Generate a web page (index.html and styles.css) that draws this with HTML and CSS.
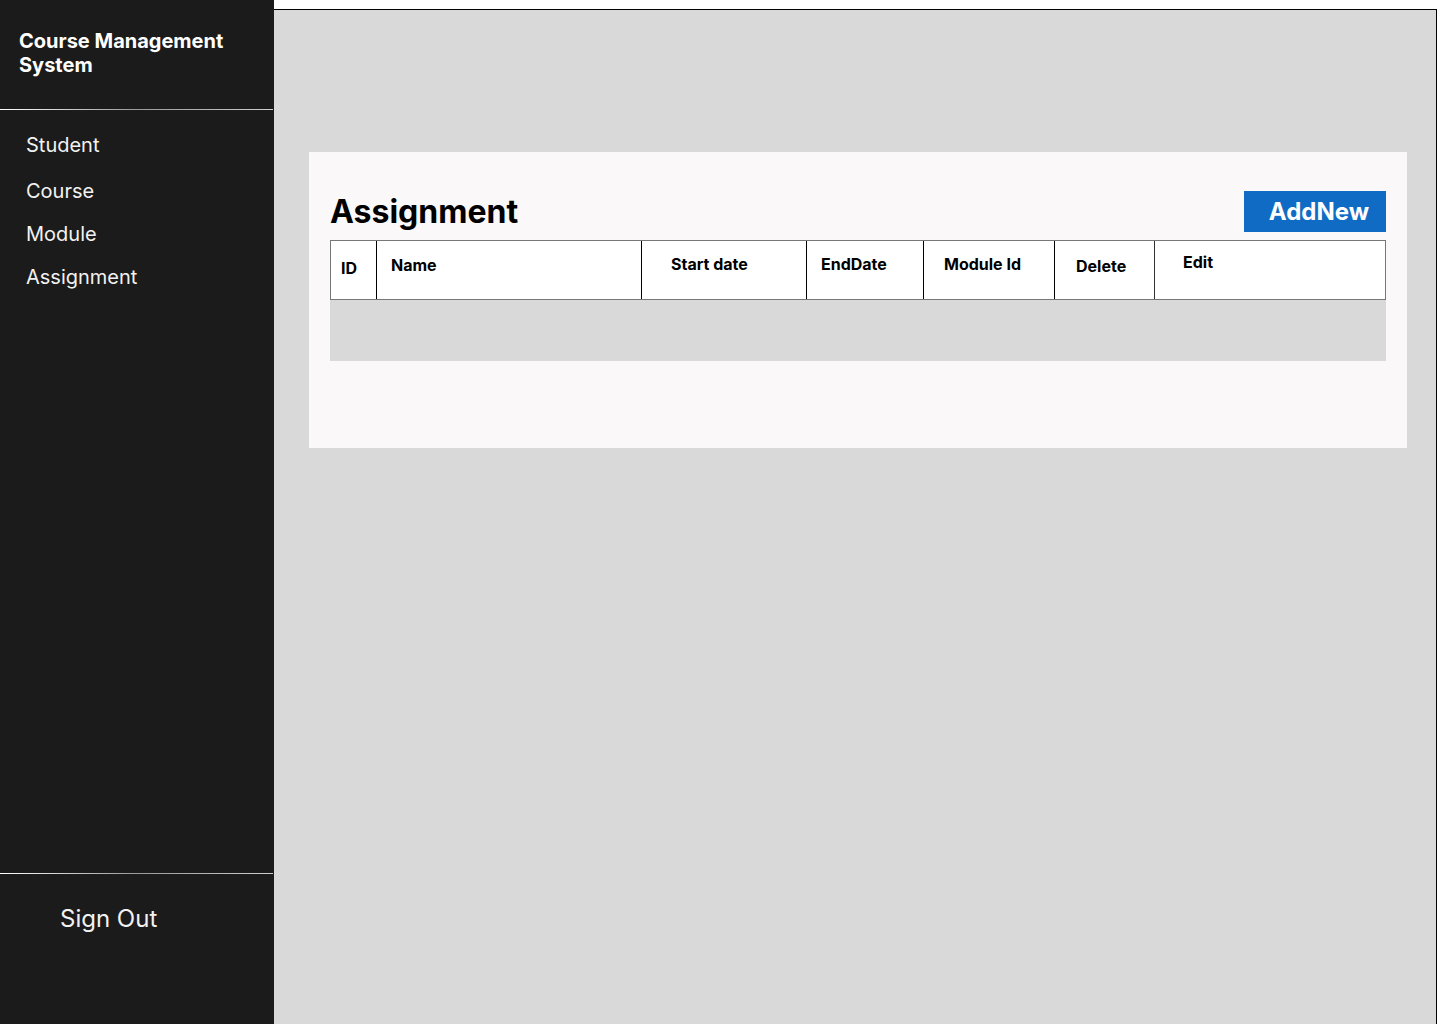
FILE: index.html
```html
<!DOCTYPE html>
<html lang="en">
<head>
<meta charset="utf-8">
<title>Course Management System - Assignment</title>
<link rel="stylesheet" href="styles.css">
</head>
<body>
<div class="app">
  <aside class="sidebar">
    <div class="brand">Course Management<br>System</div>
    <div class="divider"></div>
    <nav class="nav">
      <a class="nav-item nav-first" href="#">Student</a>
      <a class="nav-item" href="#">Course</a>
      <a class="nav-item" href="#">Module</a>
      <a class="nav-item" href="#">Assignment</a>
    </nav>
    <div class="divider"></div>
    <div class="signout">Sign Out</div>
  </aside>
  <main class="main">
    <section class="card">
      <div class="card-head">
        <h1 class="title">Assignment</h1>
        <button class="btn-add">AddNew</button>
      </div>
      <div class="table">
        <div class="thead">
          <div class="th c-id">ID</div>
          <div class="th c-name">Name</div>
          <div class="th c-start">Start date</div>
          <div class="th c-end">EndDate</div>
          <div class="th c-mod">Module Id</div>
          <div class="th c-del">Delete</div>
          <div class="th c-edit">Edit</div>
        </div>
        <div class="tbody"></div>
      </div>
    </section>
  </main>
</div>
</body>
</html>
```
FILE: styles.css
```css
* { box-sizing: border-box; }
html, body { margin: 0; padding: 0; }
body {
  background: #ffffff;
  font-family: Inter, "Noto Sans", sans-serif;
  width: 1440px;
  height: 1024px;
  overflow: hidden;
}
.app {
  display: flex;
  height: 1024px;
}
.sidebar {
  width: 274px;
  flex: 0 0 274px;
  background: #1b1b1b;
  color: #ffffff;
  display: flex;
  flex-direction: column;
  height: 1024px;
  position: relative;
  z-index: 1;
}
.brand {
  font-size: 20px;
  font-weight: 700;
  line-height: 24px;
  padding: 29px 0 0 19px;
  height: 109px;
}
.divider {
  height: 1px;
  width: 273px;
  background: linear-gradient(90deg, #ffffff 0%, #9a9a9a 50%, #cfcfcf 100%);
}
.nav {
  display: flex;
  flex-direction: column;
  padding: 23px 0 0 26px;
  flex: 1;
}
.nav-item {
  color: #f2f2f2;
  text-decoration: none;
  font-size: 20px;
  line-height: 24px;
  margin-bottom: 19px;
}
.nav-first { margin-bottom: 22px; }
.signout {
  height: 150px;
  padding: 30px 0 0 60px;
  font-size: 24px;
  line-height: 30px;
  color: #f2f2f2;
}
.main {
  margin-top: 9px;
  margin-left: -1px;
  width: 1164px;
  height: 1015px;
  background: #d9d9d9;
  border: 1px solid #000000;
  border-bottom: none;
  padding: 142px 29px 0 35px;
}
.card {
  background: #faf8f9;
  width: 1098px;
  height: 296px;
  padding: 39px 21px 0 21px;
}
.card-head {
  display: flex;
  justify-content: space-between;
  align-items: flex-start;
  height: 49px;
}
.title {
  margin: 0;
  font-size: 32px;
  font-weight: 700;
  line-height: 40px;
  color: #000000;
  padding-top: 1px;
}
.btn-add {
  width: 142px;
  height: 41px;
  background: #0f6bc3;
  color: #ffffff;
  border: none;
  font-family: Inter, "Noto Sans", sans-serif;
  font-size: 24px;
  font-weight: 700;
  padding: 0 0 0 8px;
  line-height: 41px;
}
.table {
  width: 1056px;
}
.thead {
  display: flex;
  height: 60px;
  background: #ffffff;
  border: 1px solid #777777;
}
.th {
  font-size: 16px;
  font-weight: 700;
  line-height: 20px;
  color: #000000;
  border-right: 1px solid #000000;
  padding-top: 14px;
}
.c-id { width: 46px; padding-left: 10px; padding-top: 17px; }
.c-name { width: 265px; padding-left: 14px; }
.c-start { width: 165px; padding-left: 29px; padding-top: 13px; }
.c-end { width: 117px; padding-left: 14px; padding-top: 13px; }
.c-mod { width: 131px; padding-left: 20px; padding-top: 13px; }
.c-del { width: 100px; padding-left: 21px; padding-top: 15px; border-right-color: #333333; }
.c-edit { flex: 1; padding-left: 28px; padding-top: 11px; border-right: none; }
.tbody {
  height: 61px;
  background: #d9d9d9;
}
```
